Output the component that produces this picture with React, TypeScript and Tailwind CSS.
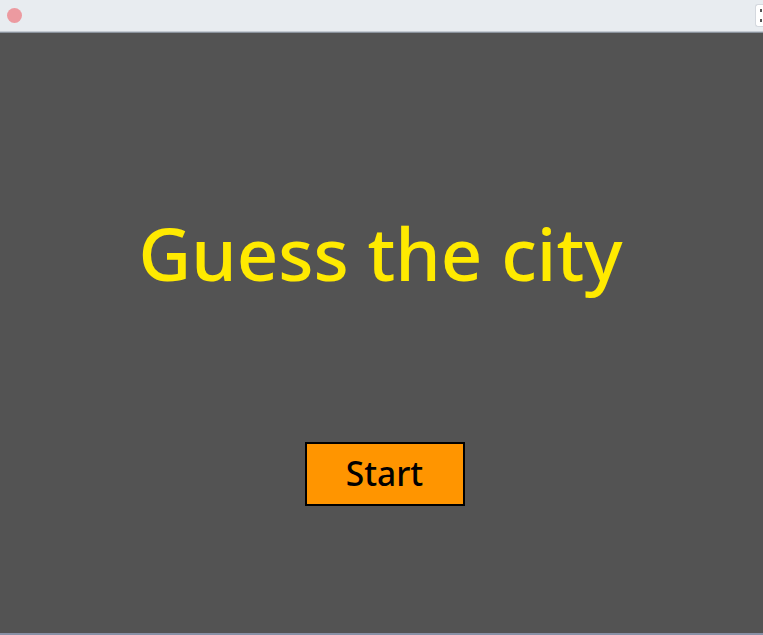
export default function App() {
  return (
    <div className="flex h-[635px] w-[763px] flex-col overflow-hidden bg-[#535353] font-['Noto_Sans',sans-serif]">
      {/* window title bar */}
      <div className="flex h-[31px] shrink-0 items-center justify-between bg-[#e8ecf0] pl-[7px]">
        <div className="h-[15px] w-[15px] rounded-full bg-[#ec9aa0]" />
        <div className="flex h-[23px] w-[8px] flex-col items-end justify-center gap-[7px] rounded-l-[3px] border border-r-0 border-[#d4d8de] bg-white pr-[1px]">
          <div className="h-[3px] w-[2px] bg-[#555]" />
          <div className="h-[3px] w-[2px] bg-[#555]" />
        </div>
      </div>
      <div className="h-[1px] shrink-0 bg-[#c4cad2]" />
      <div className="h-[1px] shrink-0 bg-[#8a929c]" />

      {/* game screen */}
      <div className="flex flex-1 flex-col items-center">
        <h1 className="mr-[2px] mt-[175px] text-[72.5px] font-medium leading-[90px] text-[#ffea00]">Guess the city</h1>
        <button className="ml-[6px] mt-[144px] h-[64px] w-[160px] border-2 border-black bg-[#ff9500] text-[33.5px] font-medium leading-none text-black">
          Start
        </button>
      </div>
      <div className="h-[2px] shrink-0 bg-[#8890a6]" />
    </div>
  );
}
